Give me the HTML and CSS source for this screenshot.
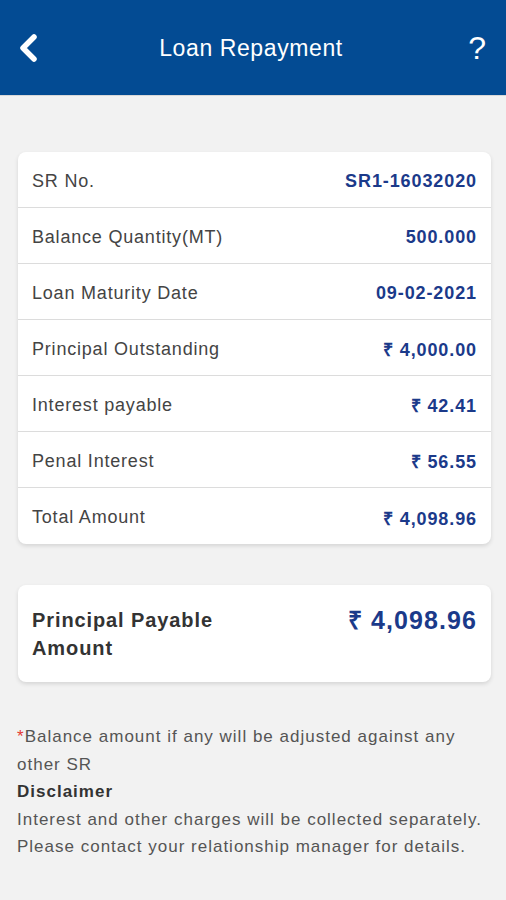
FILE: index.html
```html
<!DOCTYPE html>
<html lang="en">

<head>
    <meta charset="UTF-8">
    <meta name="viewport" content="width=device-width, initial-scale=1.0">
    <title>Loan Repayment</title>
    <link rel="stylesheet" href="styles.css">
</head>

<body>

    <header class="top-bar">
        <a class="back-btn" href="#">
            <svg width="24" height="32" viewBox="0 0 24 32">
                <path d="M18 5 L7 16 L18 27" fill="none" stroke="#fff" stroke-width="5.5" stroke-linecap="round" stroke-linejoin="round"/>
            </svg>
        </a>
        <h1>Loan Repayment</h1>
        <a class="help-btn" href="#">?</a>
    </header>

    <main class="content">
        <div class="card details">
            <div class="row"><span class="label">SR No.</span><span class="value">SR1-16032020</span></div>
            <div class="row"><span class="label">Balance Quantity(MT)</span><span class="value">500.000</span></div>
            <div class="row"><span class="label">Loan Maturity Date</span><span class="value">09-02-2021</span></div>
            <div class="row"><span class="label">Principal Outstanding</span><span class="value">₹ 4,000.00</span></div>
            <div class="row"><span class="label">Interest payable</span><span class="value">₹ 42.41</span></div>
            <div class="row"><span class="label">Penal Interest</span><span class="value">₹ 56.55</span></div>
            <div class="row"><span class="label">Total Amount</span><span class="value">₹ 4,098.96</span></div>
        </div>

        <div class="card payable">
            <div class="payable-label">Principal Payable<br>Amount</div>
            <div class="payable-value">₹ 4,098.96</div>
        </div>

        <div class="notes">
            <p class="balance-note"><span class="star">*</span>Balance amount if any will be adjusted against any other SR</p>
            <p class="disclaimer">Disclaimer</p>
            <p>Interest and other charges will be collected separately. Please contact your relationship manager for details.</p>
        </div>
    </main>

</body>

</html>
```

FILE: styles.css
```css
body {
    margin: 0;
    font-family: "Liberation Sans", Arial, sans-serif;
    background-color: #f2f2f2;
    width: 506px;
    min-height: 900px;
}

/* Header */
.top-bar {
    height: 96px;
    background-color: #034b93;
    display: flex;
    align-items: center;
    justify-content: space-between;
    padding: 0 20px 0 16px;
    box-sizing: border-box;
    border-bottom: 1px solid #d8d8d8;
}

.top-bar h1 {
    margin: 0;
    color: #fff;
    font-size: 23px;
    font-weight: normal;
    letter-spacing: 0.6px;
    padding-top: 2px;
}

.back-btn {
    display: flex;
    width: 30px;
}

.help-btn {
    width: 30px;
    text-align: right;
    color: #fff;
    text-decoration: none;
    font-size: 32px;
    line-height: 1;
}

.content {
    padding: 56px 15px 0 18px;
}

.card {
    background-color: #fff;
    border-radius: 8px;
    box-shadow: 0 2px 4px rgba(0, 0, 0, 0.12);
}

.details .row {
    display: flex;
    justify-content: space-between;
    align-items: center;
    box-sizing: border-box;
    height: 56px;
    padding: 3px 14px 0;
    border-bottom: 1px solid #dcdcdc;
}

.details .row:last-child {
    border-bottom: none;
}

.label {
    color: #444;
    font-size: 18px;
    letter-spacing: 0.8px;
}

.value {
    color: #1b3a8a;
    font-size: 18px;
    font-weight: bold;
    letter-spacing: 0.9px;
}

.payable {
    margin-top: 41px;
    display: flex;
    justify-content: space-between;
    align-items: flex-start;
    padding: 21px 14px 20px;
}

.payable-label {
    color: #333;
    font-size: 20px;
    font-weight: bold;
    letter-spacing: 0.9px;
    line-height: 28px;
}

.payable-value {
    color: #1b3a8a;
    font-size: 25px;
    font-weight: bold;
    letter-spacing: 1.1px;
    line-height: 28px;
}

/* Footer notes */
.notes {
    margin: 41px -12px 0 -1px;
    color: #555;
    font-size: 17px;
    line-height: 27.5px;
    letter-spacing: 1px;
}

.notes p {
    margin: 0;
}

.balance-note {
    max-width: 460px;
}

.star {
    color: #e53935;
}

.disclaimer {
    color: #333;
    font-weight: bold;
}
```
